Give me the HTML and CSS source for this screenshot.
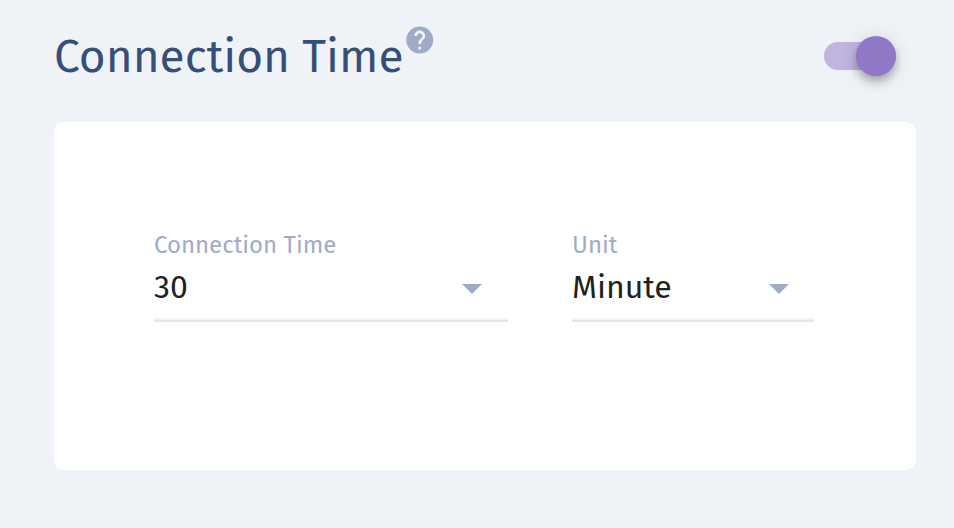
FILE: index.html
```
<!DOCTYPE html>
<html lang="en">
<head>
  <meta charset="UTF-8">
  <title>Connection Time</title>
  <meta name="viewport" content="width=device-width, initial-scale=1">
  <link rel="stylesheet" href="styles.css">
</head>
<body>
  <section class="settings">
    <!-- Section header -->
    <div class="settings-header">
      <h1 class="title">Connection Time</h1>
      <svg class="help-icon" viewBox="1.800 1.600 20.400 20.400" aria-hidden="true">
        <path d="M12 2C6.48 2 2 6.48 2 12s4.48 10 10 10 10-4.48 10-10S17.520 2 12 2zm1 17h-2v-2h2v2zm2.070-7.750l-.9.920C13.450 12.900 13 13.500 13 15h-2v-.5c0-1.100.450-2.100 1.170-2.830l1.240-1.260c.370-.360.590-.860.590-1.410 0-1.100-.9-2-2-2s-2 .9-2 2H8c0-2.210 1.790-4 4-4s4 1.790 4 4c0 .880-.360 1.680-.930 2.250z"/>
      </svg>
      <div class="toggle" role="switch" aria-checked="true">
        <div class="toggle-track"></div>
        <div class="toggle-thumb"></div>
      </div>
    </div>

    <!-- Card with the two selects -->
    <div class="card">
      <div class="field field-time">
        <span class="field-label">Connection Time</span>
        <div class="field-select">
          <span class="field-value">30</span>
          <span class="arrow"></span>
        </div>
      </div>
      <div class="field field-unit">
        <span class="field-label">Unit</span>
        <div class="field-select">
          <span class="field-value">Minute</span>
          <span class="arrow"></span>
        </div>
      </div>
    </div>
  </section>
</body>
</html>
```

FILE: styles.css
```
* {
  box-sizing: border-box;
}
body {
  margin: 0;
  background-color: #eff3f8;
  font-family: "Fira Sans", "Noto Sans", sans-serif;
  -webkit-font-smoothing: antialiased;
}
.settings {
  height: 528px;
  padding: 26px 38px 58px 54px;
}
.settings-header {
  display: flex;
  align-items: flex-start;
  height: 96px;
}
.title {
  width: 352px;
  margin: 0;
  font-size: 46px;
  font-weight: 400;
  line-height: 61px;
  white-space: nowrap;
  color: #364f79;
}
.help-icon {
  width: 27.500px;
  height: 27.500px;
  fill: #9fabc7;
}
/* Toggle */
.toggle {
  position: relative;
  width: 72px;
  height: 40px;
  margin: 10px 20px 0 auto;
}
.toggle-track {
  width: 72px;
  height: 28px;
  margin-top: 6px;
  border-radius: 14px;
  background-color: #bfb5df;
}
.toggle-thumb {
  position: absolute;
  top: 0;
  right: 0;
  width: 40px;
  height: 40px;
  border-radius: 50%;
  background-color: #9078c6;
  box-shadow: 0 4px 8px -2px rgba(0, 0, 0, 0.2),
    0 8px 10px 0 rgba(0, 0, 0, 0.14),
    0 2px 20px 0 rgba(0, 0, 0, 0.12);
}
/* Card */
.card {
  display: flex;
  gap: 64px;
  height: 348px;
  padding: 108px 100px 0;
  border-radius: 10px;
  background-color: #fff;
}
.field-time {
  width: 354px;
}
.field-unit {
  width: 242px;
}
.field-label {
  display: block;
  font-size: 24px;
  line-height: 30px;
  white-space: nowrap;
  color: #9fabc7;
}
.field-select {
  display: flex;
  align-items: center;
  justify-content: space-between;
  height: 62px;
  padding: 0 25px 6px 0;
  border-bottom: 2px solid #e2e6f1;
  box-shadow: inset 0 -2px #f2f4f9;
}
.field-time .field-select {
  padding-right: 26px;
}
.field-value {
  font-size: 32px;
  line-height: 40px;
  color: #212121;
}
.arrow {
  margin-top: 4px;
  border: 10px solid transparent;
  border-top-color: #9fabc7;
  border-bottom: 0;
}
```
